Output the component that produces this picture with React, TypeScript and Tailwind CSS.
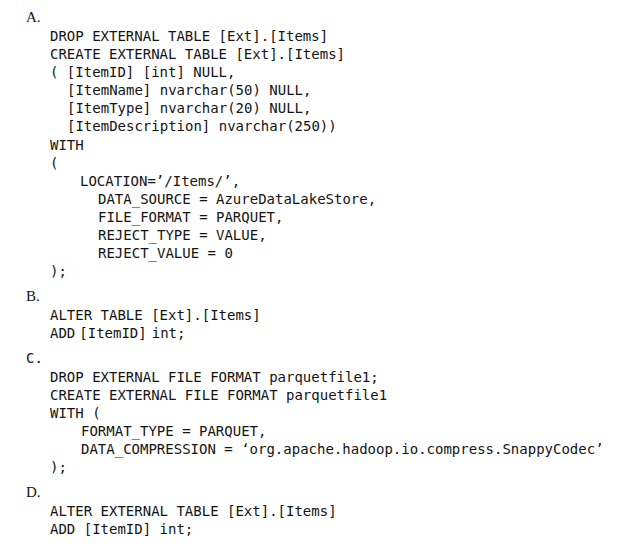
import React from "react";

const mono = { fontFamily: '"DejaVu Sans Mono", "Liberation Mono", monospace' };

function Label({ children, serif = true }: { children: React.ReactNode; serif?: boolean }) {
  return (
    <div
      className={
        serif
          ? "pl-[26px] h-[19px] leading-[19px] text-[15px] font-['Liberation_Serif',serif]"
          : "pl-[26px] h-[19px] leading-[19px] text-[14px] font-['DejaVu_Sans_Mono',monospace]"
      }
    >
      {children}
    </div>
  );
}

function Line({ indent = 50, children }: { indent?: number; children: React.ReactNode }) {
  return (
    <div className="h-[18.1px] leading-[18.1px] whitespace-pre text-[14px]" style={{ paddingLeft: indent, ...mono }}>
      {children}
    </div>
  );
}

export default function App() {
  return (
    <div className="w-[623px] h-[559px] bg-white text-[#141414] pt-[8px] overflow-hidden">
      <section>
        <Label>A.</Label>
        <Line>DROP EXTERNAL TABLE [Ext].[Items]</Line>
        <Line>CREATE EXTERNAL TABLE [Ext].[Items]</Line>
        <Line>( [ItemID] [int] NULL,</Line>
        <Line indent={67}>[ItemName] nvarchar(50) NULL,</Line>
        <Line indent={67}>[ItemType] nvarchar(20) NULL,</Line>
        <Line indent={67}>[ItemDescription] nvarchar(250))</Line>
        <Line>WITH</Line>
        <Line>(</Line>
        <Line indent={80}>LOCATION=’/Items/’,</Line>
        <Line indent={98}>DATA_SOURCE = AzureDataLakeStore,</Line>
        <Line indent={98}>FILE_FORMAT = PARQUET,</Line>
        <Line indent={98}>REJECT_TYPE = VALUE,</Line>
        <Line indent={98}>REJECT_VALUE = 0</Line>
        <Line>);</Line>
      </section>
      <section className="mt-[7px]">
        <Label>B.</Label>
        <Line>ALTER TABLE [Ext].[Items]</Line>
        <Line>
          ADD<span className="ml-[4px]">[ItemID]</span>
          <span className="ml-[5px]">int;</span>
        </Line>
      </section>
      <section className="mt-[6px]">
        <Label serif={false}>C.</Label>
        <Line>DROP EXTERNAL FILE FORMAT parquetfile1;</Line>
        <Line>CREATE EXTERNAL FILE FORMAT parquetfile1</Line>
        <Line>WITH (</Line>
        <Line indent={81}>FORMAT_TYPE = PARQUET,</Line>
        <Line indent={81}>DATA_COMPRESSION = ‘org.apache.hadoop.io.compress.SnappyCodec’</Line>
        <Line>);</Line>
      </section>
      <section className="mt-[7px]">
        <Label>D.</Label>
        <Line>ALTER EXTERNAL TABLE [Ext].[Items]</Line>
        <Line>ADD [ItemID] int;</Line>
      </section>
    </div>
  );
}
